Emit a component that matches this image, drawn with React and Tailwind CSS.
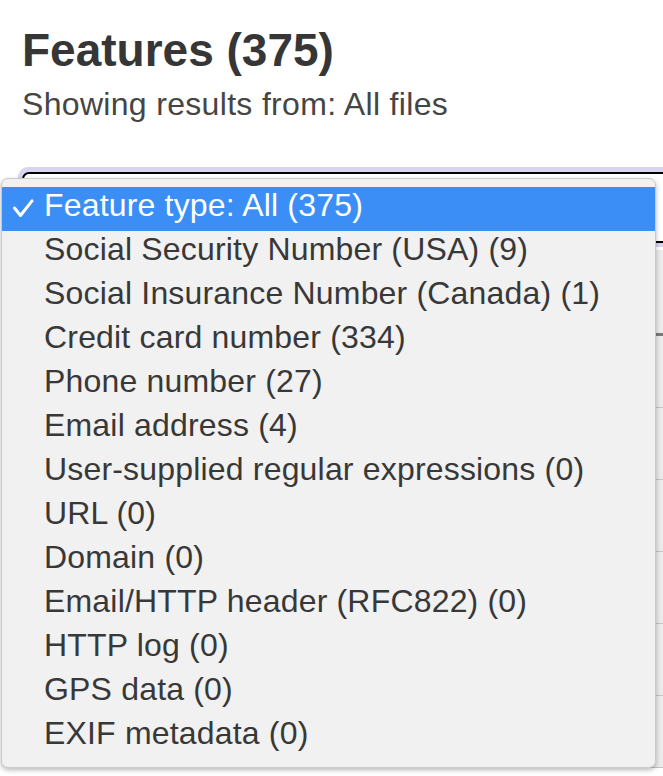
import React from "react";

const items = [
  "Feature type: All (375)",
  "Social Security Number (USA) (9)",
  "Social Insurance Number (Canada) (1)",
  "Credit card number (334)",
  "Phone number (27)",
  "Email address (4)",
  "User-supplied regular expressions (0)",
  "URL (0)",
  "Domain (0)",
  "Email/HTTP header (RFC822) (0)",
  "HTTP log (0)",
  "GPS data (0)",
  "EXIF metadata (0)",
];

export default function App() {
  return (
    <div
      className="relative w-[663px] h-[776px] overflow-hidden bg-white"
      style={{ fontFamily: '"Liberation Sans", Arial, sans-serif' }}
    >
      <div className="pl-[22px] pt-[24px]">
        <h1 className="text-[46px] leading-[52px] font-bold text-[#363636]">
          Features (375)
        </h1>
        <p className="mt-[8px] text-[32px] leading-[40px] text-[#454545] tracking-[0.32px]">
          Showing results from: All files
        </p>
        <div className="mt-[43px] -ml-[4px] w-[720px] h-[80px] rounded-[10px] bg-[#d8d3ef] p-[4px] pt-[5px]">
          <div className="w-full h-full rounded-[7px] border-2 border-black bg-white"></div>
        </div>
        <div className="mt-[3px] w-[720px] bg-[#ebebeb]">
          <div className="h-[86px] border-b-[3px] border-[#7b7b7b]"></div>
          {[0, 1, 2, 3, 4, 5].map((i) => (
            <div key={i} className="h-[72px] border-b border-[#c3c3c3]"></div>
          ))}
        </div>
      </div>

      <div className="absolute left-[1px] top-[178px] w-[655px] h-[590px] rounded-[7px] border border-[#cbcbcb] bg-[#f1f1f1] shadow-[0_2px_5px_rgba(0,0,0,0.28)] pt-[8px] overflow-hidden">
        {items.map((t, i) => (
          <div
            key={t}
            className={
              "relative h-[44px] pl-[42px] text-[32px] leading-[36px] tracking-[0.18px] whitespace-nowrap " +
              (i === 0 ? "bg-[#3b8ef5] text-white" : "text-[#383838]")
            }
          >
            {i === 0 && (
              <svg
                className="absolute left-[10px] top-[12px]"
                width="22"
                height="19"
                viewBox="0 0 22 19"
              >
                <polyline
                  points="2.5,9 8.5,16.5 20,1.8"
                  fill="none"
                  stroke="white"
                  strokeWidth="3"
                  strokeLinecap="round"
                  strokeLinejoin="round"
                />
              </svg>
            )}
            {t}
          </div>
        ))}
      </div>
    </div>
  );
}
